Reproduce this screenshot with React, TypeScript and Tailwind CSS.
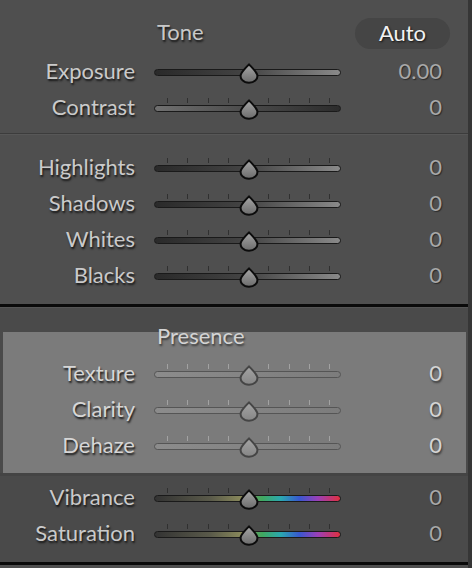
import React from "react";

type Variant = "dark" | "contrast" | "presence" | "color";

const trackClass: Record<Variant, string> = {
  dark: "bg-[linear-gradient(to_right,#2a2a2a,#444444_50%,#8a8a8a)] border-[#1a1a1a]",
  contrast: "bg-[linear-gradient(to_right,#707070,#4a4a4a_50%,#2c2c2c)] border-[#1a1a1a]",
  presence: "bg-[linear-gradient(to_right,#8c8c8c,#7c7c7c)] border-[#555555]",
  color:
    "bg-[linear-gradient(to_right,#333333,#5a5a4a_30%,#8c8c5c_48%,#40a860_58%,#2aa8b0_68%,#3858d0_78%,#9a40b8_88%,#e03040)] border-[#1a1a1a]",
};

function Thumb({ faded }: { faded?: boolean }) {
  const id = faded ? "thumbFaded" : "thumbNormal";
  return (
    <svg
      className="absolute left-[85px] top-[9px]"
      width="20"
      height="21"
      viewBox="0 0 20 21"
    >
      <defs>
        <linearGradient id={id} x1="0" y1="0" x2="0" y2="1">
          <stop offset="0" stopColor={faded ? "#a4a4a4" : "#a6a6a6"} />
          <stop offset="1" stopColor={faded ? "#868686" : "#6c6c6c"} />
        </linearGradient>
      </defs>
      <path
        d="M10 1.3 C11.6 3.2 16.8 8 18.1 11.4 C19.5 15.6 15.6 19.7 10 19.7 C4.4 19.7 0.5 15.6 1.9 11.4 C3.2 8 8.4 3.2 10 1.3 Z"
        fill={`url(#${id})`}
        stroke={faded ? "#454545" : "#0c0c0c"}
        strokeWidth="2"
        strokeLinejoin="round"
      />
    </svg>
  );
}

function Slider({ variant, ticks }: { variant: Variant; ticks: boolean }) {
  const faded = variant === "presence";
  return (
    <div className="relative w-[187px] h-9 flex flex-col">
      <div className="h-[8px]" />
      <div className="h-[5px] ml-[13px] w-[163px] flex justify-between">
        {ticks &&
          Array.from({ length: 9 }).map((_, i) => (
            <div
              key={i}
              className={
                i === 4
                  ? "w-px h-full"
                  : faded
                  ? "w-px h-full bg-[#a2a2a2]"
                  : "w-px h-full bg-[#303030]"
              }
            />
          ))}
      </div>
      <div className="h-[2px]" />
      <div className={`h-[7px] rounded-full border ${trackClass[variant]}`} />
      <Thumb faded={faded} />
    </div>
  );
}

const font = "font-['Lato','Open_Sans',sans-serif]";

function Row({
  label,
  value,
  variant,
  ticks = true,
  inPanel,
}: {
  label: string;
  value: string;
  variant: Variant;
  ticks?: boolean;
  inPanel?: boolean;
}) {
  return (
    <div className="flex h-9 items-start">
      <div
        className={`${inPanel ? "w-[132px] text-[#d6d6d6]" : "w-[135px] text-[#cacaca]"} text-right text-[22px] leading-[33px] [text-shadow:1px_2px_2px_#161616]`}
      >
        {label}
      </div>
      <div className="w-[19px]" />
      <Slider variant={variant} ticks={ticks} />
      <div
        className={`flex-1 text-right text-[22px] leading-[33px] ${inPanel ? "pr-[24px] text-[#d4d4d4] [text-shadow:1px_2px_2px_#3a3a3a]" : "pr-[26px] text-[#a8a8a8] [text-shadow:1px_1px_1px_#2a2a2a]"}`}
      >
        {value}
      </div>
    </div>
  );
}

export default function App() {
  return (
    <div className={`w-[472px] h-[568px] flex ${font} overflow-hidden`}>
      <div className="w-[468px] flex flex-col bg-[#4f4f4f]">
        {/* Tone */}
        <div className="pt-[15px] pb-[7px]">
          <div className="h-9 mb-[3px] flex items-center">
            <div className="ml-[157px] -mt-[3px] text-[22px] text-[#c8c8c8] [text-shadow:1px_2px_2px_#161616]">
              Tone
            </div>
            <div className="ml-auto mr-[18px] w-[95px] h-[31px] rounded-full bg-[#454545] flex items-center justify-center text-[22px] text-[#f2f2f2] [text-shadow:1px_1px_2px_#111]">
              <span className="-mt-[2px]">Auto</span>
            </div>
          </div>
          <Row label="Exposure" value="0.00" variant="dark" ticks={false} />
          <Row label="Contrast" value="0" variant="contrast" />
        </div>
        <div className="h-px bg-[#3c3c3c]" />
        <div className="h-px bg-[#575757]" />
        <div className="pt-[15px] pb-[10px]">
          <Row label="Highlights" value="0" variant="dark" />
          <Row label="Shadows" value="0" variant="dark" />
          <Row label="Whites" value="0" variant="dark" />
          <Row label="Blacks" value="0" variant="dark" />
        </div>
        <div className="h-[3px] bg-[#0a0a0a]" />
        {/* Presence */}
        <div className="bg-[#4a4a4a] flex flex-col">
          <div className="h-px bg-[#555555]" />
          <div className="h-[24px]" />
          <div className="mx-[3px] w-[463px] bg-[#7b7b7b] pb-[9px]">
            <div className="-mt-[5px] h-[20px] mb-[9px] flex items-center">
              <div className="ml-[154px] -mt-[3px] text-[22px] leading-[20px] text-[#d4d4d4] [text-shadow:1px_2px_2px_#3a3a3a]">
                Presence
              </div>
            </div>
            <Row label="Texture" value="0" variant="presence" inPanel />
            <Row label="Clarity" value="0" variant="presence" inPanel />
            <Row label="Dehaze" value="0" variant="presence" inPanel />
          </div>
          <div className="h-[3px] bg-[#444444]" />
          <div className="pt-[4px] pb-[10px]">
            <Row label="Vibrance" value="0" variant="color" />
            <Row label="Saturation" value="0" variant="color" />
          </div>
          <div className="h-[3px] bg-[#0a0a0a]" />
          <div className="flex-1 bg-[#555555]" />
        </div>
      </div>
      <div className="w-[4px] bg-[#363636]" />
    </div>
  );
}
